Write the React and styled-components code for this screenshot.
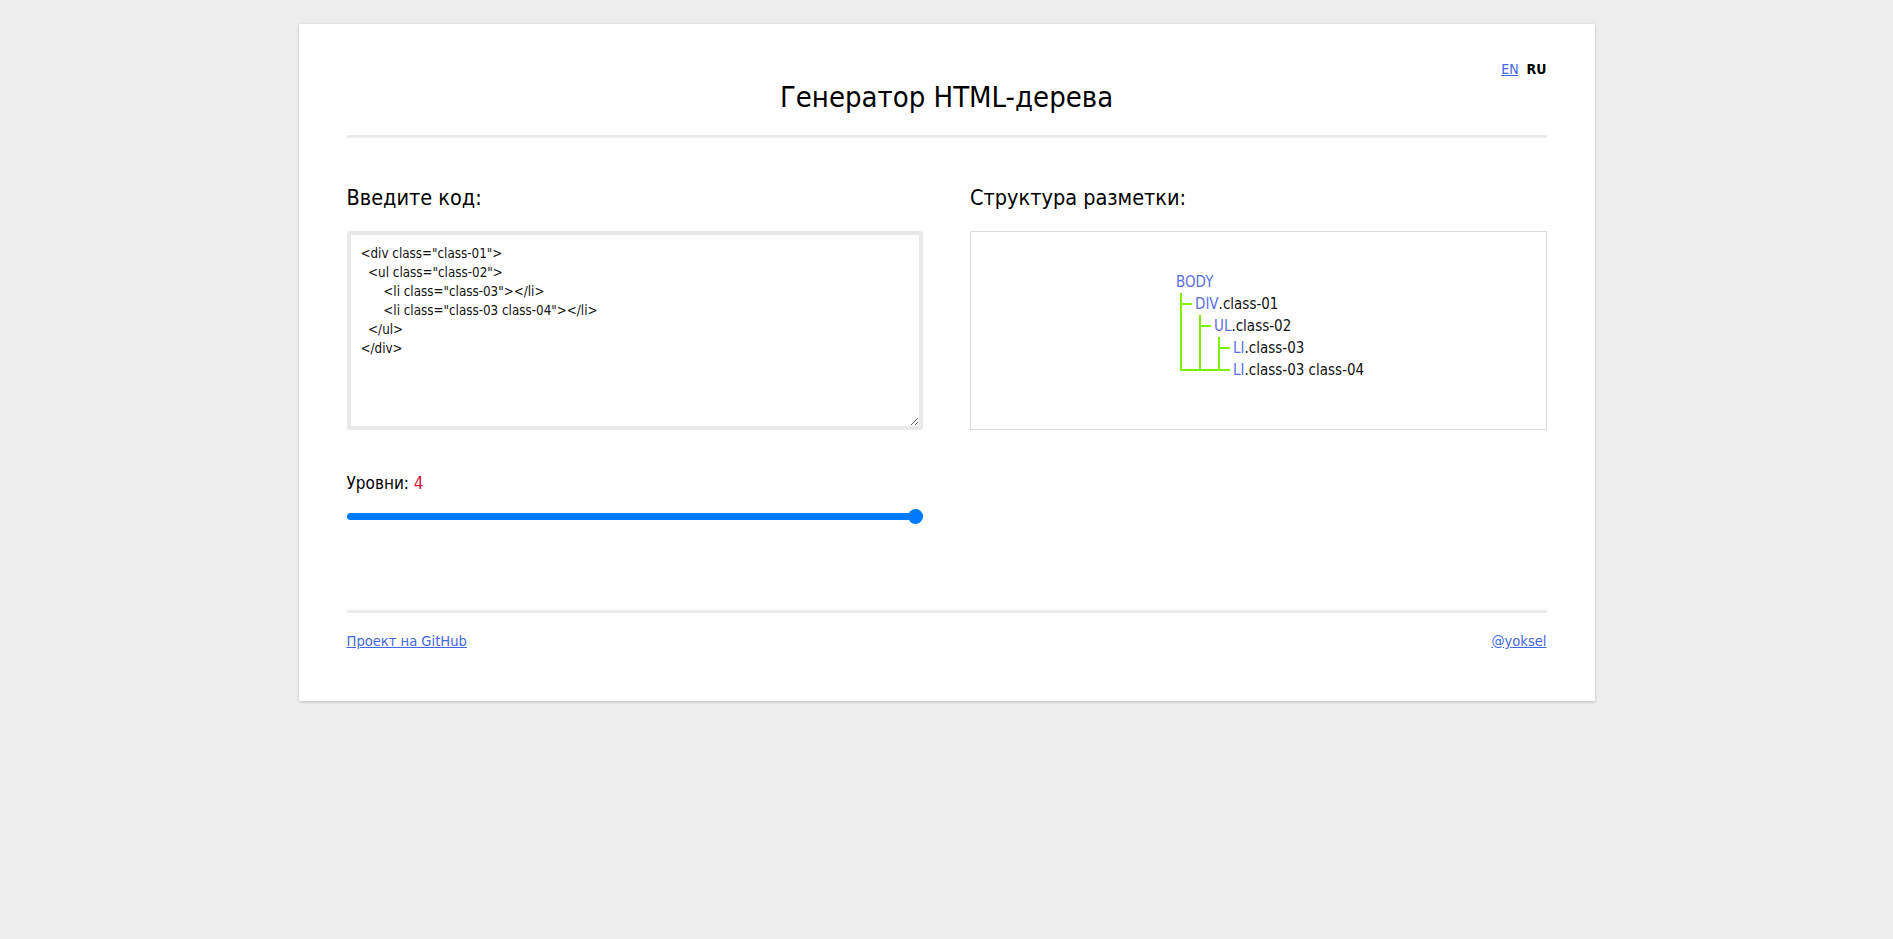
import React from 'react';
import styled, { createGlobalStyle } from 'styled-components';

const FONT = `"DejaVu Sans Condensed", "DejaVu Sans", Tahoma, sans-serif`;
const GREEN = '#7cf000';
const BLUE = '#4169e1';

const Global = createGlobalStyle`
  html, body { margin: 0; padding: 0; background: #ededed; }
  body { font-family: ${FONT}; color: #000; }
  * { box-sizing: border-box; }
`;

const Page = styled.div`
  padding: 24px 0 40px;
`;

const Card = styled.main`
  width: 1296px;
  margin: 0 auto;
  background: #fff;
  padding: 37px 48px 51px;
  box-shadow: 0 1px 3px rgba(0, 0, 0, 0.2);
`;

const Header = styled.header`
  display: grid;
  grid-template-columns: 1fr auto 1fr;
  align-items: start;
`;

const Title = styled.h1`
  grid-column: 2;
  margin: 19px 0 0;
  font-size: 29px;
  line-height: 35px;
  font-weight: normal;
  white-space: nowrap;
`;

const Lang = styled.nav`
  grid-column: 3;
  justify-self: end;
  display: flex;
  gap: 8px;
  font-size: 14px;
  line-height: 17px;
`;

const LangLink = styled.a`
  color: ${BLUE};
  text-decoration: underline;
`;

const LangCurrent = styled.b`
  font-weight: bold;
  color: #000;
`;

const Divider = styled.hr`
  border: 0;
  height: 3px;
  margin: ${(p) => p.$mt || 0}px 0 0;
  background: #ebebeb;
`;

const Columns = styled.section`
  display: grid;
  grid-template-columns: 1fr 1fr;
  column-gap: 47px;
  margin-top: 47px;
`;

const Column = styled.div`
  display: flex;
  flex-direction: column;
`;

const Heading = styled.h2`
  margin: 0 0 20px;
  font-size: 21.5px;
  line-height: 26px;
  font-weight: normal;
`;

const Code = styled.textarea`
  display: block;
  width: 100%;
  height: 199px;
  margin: 0;
  padding: 9px 10px;
  border: 4px solid #e9e9e9;
  border-radius: 3px;
  font-family: ${FONT};
  font-size: 13.3px;
  line-height: 19px;
  color: #111;
  background: #fff;
  white-space: pre;
  outline: none;
  resize: vertical;
`;

const TreeBox = styled.div`
  height: 199px;
  border: 1px solid #dcdcdc;
  padding: 39px 0 0 205px;
`;

const Tree = styled.div`
  display: flex;
  flex-direction: column;
  font-size: 15px;
  line-height: 22px;
`;

const Row = styled.div`
  display: flex;
  white-space: nowrap;
`;

const line = `linear-gradient(${GREEN}, ${GREEN})`;
const guideBg = {
  pipe: `${line} 4px 0 / 2px 100% no-repeat`,
  tee: `${line} 4px 0 / 2px 100% no-repeat, ${line} 4px 50% / 12px 2px no-repeat`,
  corner: `${line} 4px 0 / 2px calc(50% + 1px) no-repeat, ${line} 4px 50% / 15px 2px no-repeat`,
  through: `${line} 4px 0 / 2px calc(50% + 1px) no-repeat, ${line} 0 50% / 19px 2px no-repeat`,
  end: `${line} 4px 0 / 2px calc(50% + 1px) no-repeat, ${line} 0 50% / 16px 2px no-repeat`,
};

const Guide = styled.span`
  flex: none;
  width: 19px;
  background: ${(p) => guideBg[p.$kind]};
`;

const Tag = styled.span`
  color: #5b6fe0;
`;

const Cls = styled.span`
  color: #111;
`;

const Levels = styled.div`
  margin-top: 43px;
  font-size: 17px;
  line-height: 20px;
`;

const LevelValue = styled.span`
  color: #dc143c;
`;

const Range = styled.input`
  -webkit-appearance: none;
  appearance: none;
  display: block;
  width: 100%;
  height: 15px;
  margin: 16px 0 0;
  padding: 0;
  background: transparent;

  &::-webkit-slider-runnable-track {
    height: 7px;
    border-radius: 4px;
    background: #007bff;
  }
  &::-webkit-slider-thumb {
    -webkit-appearance: none;
    width: 15px;
    height: 15px;
    margin-top: -4px;
    border: 0;
    border-radius: 50%;
    background: #007bff;
  }
`;

const Footer = styled.footer`
  display: flex;
  justify-content: space-between;
  margin-top: 19px;
  font-size: 14.6px;
  line-height: 18px;
`;

const FootLink = styled.a`
  color: ${BLUE};
  text-decoration: underline;
`;

const code = `<div class="class-01">
  <ul class="class-02">
      <li class="class-03"></li>
      <li class="class-03 class-04"></li>
  </ul>
</div>`;

const rows = [
  { tag: 'BODY', cls: '', guides: [] },
  { tag: 'DIV', cls: 'class-01', guides: ['tee'] },
  { tag: 'UL', cls: 'class-02', guides: ['pipe', 'tee'] },
  { tag: 'LI', cls: 'class-03', guides: ['pipe', 'pipe', 'tee'] },
  { tag: 'LI', cls: 'class-03 class-04', guides: ['corner', 'through', 'end'] },
];

export default function App() {
  return (
    <>
      <Global />
      <Page>
        <Card>
          <Header>
            <Title>Генератор HTML-дерева</Title>
            <Lang>
              <LangLink href="#">EN</LangLink>
              <LangCurrent>RU</LangCurrent>
            </Lang>
          </Header>
          <Divider $mt={20} />
          <Columns>
            <Column>
              <Heading>Введите код:</Heading>
              <Code defaultValue={code} spellCheck={false} />
              <Levels>
                Уровни: <LevelValue>4</LevelValue>
              </Levels>
              <Range type="range" min="1" max="4" defaultValue="4" />
            </Column>
            <Column>
              <Heading>Структура разметки:</Heading>
              <TreeBox>
                <Tree>
                  {rows.map((r, i) => (
                    <Row key={i}>
                      {r.guides.map((g, j) => (
                        <Guide key={j} $kind={g} />
                      ))}
                      <Tag>{r.tag}</Tag>
                      {r.cls && <Cls>.{r.cls}</Cls>}
                    </Row>
                  ))}
                </Tree>
              </TreeBox>
            </Column>
          </Columns>
          <Divider $mt={86} />
          <Footer>
            <FootLink href="#">Проект на GitHub</FootLink>
            <FootLink href="#">@yoksel</FootLink>
          </Footer>
        </Card>
      </Page>
    </>
  );
}
